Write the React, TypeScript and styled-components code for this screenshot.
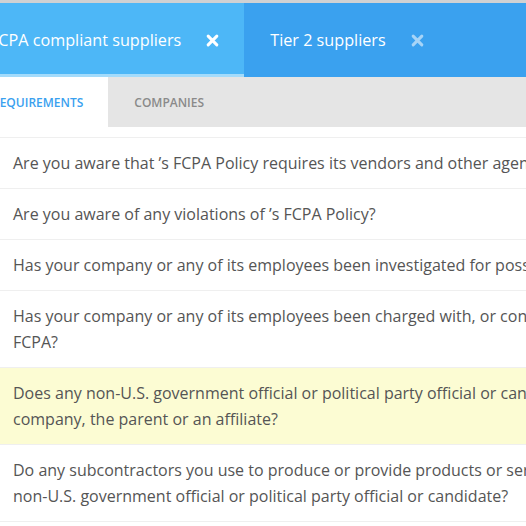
import styled, { createGlobalStyle } from 'styled-components'

const GlobalStyle = createGlobalStyle`
  html, body {
    margin: 0;
    padding: 0;
    background: #ffffff;
    overflow: hidden;
  }
  body {
    width: 526px;
    height: 526px;
    font-family: "Open Sans", "Liberation Sans", sans-serif;
  }
`

const Page = styled.div`
  width: 526px;
  overflow: hidden;
  border-top: 3px solid #cfd1d3;
`

const TopTabs = styled.div`
  display: flex;
  width: 1000px;
  height: 74px;
  margin-left: -36px;
  background: #3aa1ef;
`

const TopTab = styled.div<{ $active?: boolean }>`
  display: flex;
  align-items: center;
  gap: 25px;
  padding: 0 25px 0 26px;
  color: #ffffff;
  font-size: 16.2px;
  background: ${p => (p.$active ? '#4db7f7' : '#3aa1ef')};
  box-shadow: ${p => (p.$active ? 'inset 0 -3px 0 #a3dbfb' : 'none')};
`

const CloseIcon = styled.svg<{ $dim?: boolean }>`
  width: 13px;
  height: 13px;
  margin-top: 1px;
  opacity: ${p => (p.$dim ? 0.55 : 1)};
`

const SubTabs = styled.div`
  display: flex;
  width: 1000px;
  height: 50px;
  margin-left: -34px;
  background: #e5e5e5;
`

const SubTab = styled.div<{ $active?: boolean }>`
  display: flex;
  align-items: center;
  padding: 0 25px 0 26px;
  font-size: 12px;
  font-weight: 600;
  color: ${p => (p.$active ? '#3aa1ef' : '#8a8a8a')};
  background: ${p => (p.$active ? '#ffffff' : 'transparent')};
`

const List = styled.div`
  width: 1200px;
  margin-top: 10px;
  border-top: 1px solid #efefef;
`

const Row = styled.div<{ $highlight?: boolean }>`
  padding: 12px 13px;
  font-size: 16px;
  line-height: 26px;
  color: #555555;
  white-space: nowrap;
  border-bottom: 1px solid #efefef;
  background: ${p => (p.$highlight ? '#fcfcd3' : '#ffffff')};
`

const Close = ({ dim }: { dim?: boolean }) => (
  <CloseIcon $dim={dim} viewBox='0 0 12 12'>
    <path d='M2 2 L10 10 M10 2 L2 10' stroke='#ffffff' strokeWidth='2.8' strokeLinecap='round' />
  </CloseIcon>
)

const questions: { lines: string[], highlight?: boolean }[] = [
  { lines: ['Are you aware that \u2019s FCPA Policy requires its vendors and other agents to comply with the FCPA?'] },
  { lines: ['Are you aware of any violations of \u2019s FCPA Policy?'] },
  { lines: ['Has your company or any of its employees been investigated for possible violations of the FCPA?'] },
  {
    lines: [
      'Has your company or any of its employees been charged with, or convicted of, violating the',
      'FCPA?'
    ]
  },
  {
    lines: [
      'Does any non-U.S. government official or political party official or candidate have an ownership interest in your',
      'company, the parent or an affiliate?'
    ],
    highlight: true
  },
  {
    lines: [
      'Do any subcontractors you use to produce or provide products or services to  have a relationship with a',
      'non-U.S. government official or political party official or candidate?'
    ]
  }
]

export default function App () {
  return (
    <>
      <GlobalStyle />
      <Page>
        <TopTabs>
          <TopTab $active>
            <span>FCPA compliant suppliers</span>
            <Close />
          </TopTab>
          <TopTab>
            <span>Tier 2 suppliers</span>
            <Close dim />
          </TopTab>
        </TopTabs>
        <SubTabs>
          <SubTab $active>REQUIREMENTS</SubTab>
          <SubTab>COMPANIES</SubTab>
        </SubTabs>
        <List>
          {questions.map((q, i) => (
            <Row key={i} $highlight={q.highlight}>
              {q.lines.map((l, j) => (
                <div key={j}>{l}</div>
              ))}
            </Row>
          ))}
        </List>
      </Page>
    </>
  )
}
